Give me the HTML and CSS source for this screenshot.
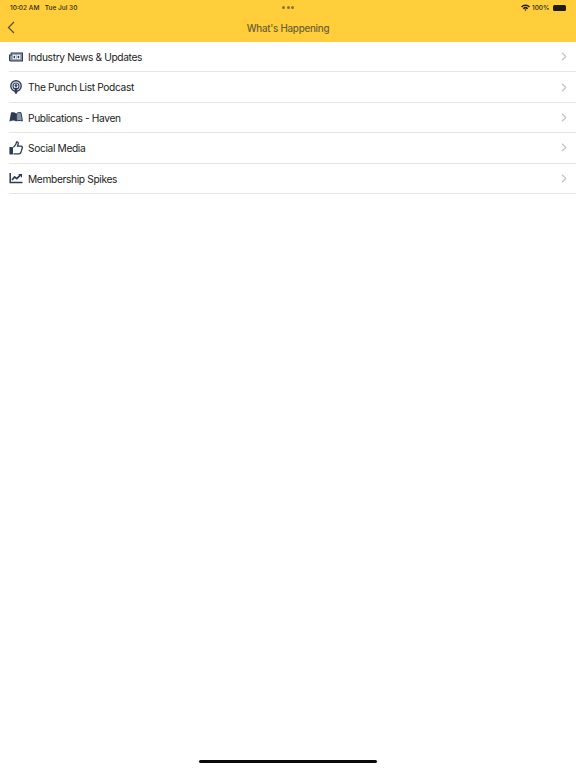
FILE: index.html
```html
<!DOCTYPE html>
<html lang="en">
<head>
    <meta charset="UTF-8">
    <meta name="viewport" content="width=device-width, initial-scale=1.0">
    <title>What's Happening</title>
    <link rel="stylesheet" href="styles.css">
</head>
<body>
    <header class="top-bar">
        <div class="status-bar">
            <div class="status-left">
                <span>10:02 AM</span>
                <span>Tue Jul 30</span>
            </div>
            <div class="status-dots"><i></i><i></i><i></i></div>
            <div class="status-right">
                <svg class="wifi" width="9" height="7" viewBox="0 0 20 15">
                    <path d="M0 5 A14 14 0 0 1 20 5 L17.6 7.6 A10.6 10.6 0 0 0 2.4 7.6 Z" />
                    <path d="M4 9 A8.6 8.6 0 0 1 16 9 L13.6 11.4 A5.2 5.2 0 0 0 6.4 11.4 Z" />
                    <path d="M7.8 12.6 A3.2 3.2 0 0 1 12.2 12.6 L10 15 Z" />
                </svg>
                <span>100%</span>
                <div class="battery"></div>
            </div>
        </div>
        <div class="nav-bar">
            <svg class="back" width="8" height="13" viewBox="0 0 8 13">
                <path d="M7 1 L1.5 6.5 L7 12" />
            </svg>
            <div class="nav-title">What's Happening</div>
        </div>
    </header>

    <ul class="menu">
        <li class="menu-item">
            <svg class="icon" width="14" height="14" viewBox="0 0 14 14">
                <path d="M2.2 3 H13.5 V11 H1.8 A1.3 1.3 0 0 1 .5 9.7 V5 H2.2 Z" fill="#8d97aa" stroke="#2b3a55" stroke-width="1.1" />
                <rect x="3.8" y="4.8" width="3" height="4.4" fill="#fff" />
                <rect x="7.6" y="4.8" width="3.6" height="4.4" fill="#fff" />
                <rect x="4.6" y="5.8" width="1.4" height="2.4" fill="#2b3a55" />
                <rect x="8.6" y="5.8" width="1.6" height="2.4" fill="#2b3a55" />
            </svg>
            <span class="label">Industry News &amp; Updates</span>
            <svg class="chevron" width="6" height="9" viewBox="0 0 6 9"><path d="M1 .8 L4.8 4.5 L1 8.2" /></svg>
        </li>
        <li class="menu-item">
            <svg class="icon" width="14" height="14" viewBox="0 0 14 14">
                <circle cx="7" cy="6" r="5.2" fill="none" stroke="#2b3a55" stroke-width="1.4" />
                <circle cx="7" cy="6" r="3" fill="none" stroke="#2b3a55" stroke-width="1.1" />
                <circle cx="7" cy="5.6" r="1.4" fill="#2b3a55" />
                <rect x="5.7" y="7.6" width="2.6" height="6.2" rx="1.1" fill="#2b3a55" />
            </svg>
            <span class="label">The Punch List Podcast</span>
            <svg class="chevron" width="6" height="9" viewBox="0 0 6 9"><path d="M1 .8 L4.8 4.5 L1 8.2" /></svg>
        </li>
        <li class="menu-item">
            <svg class="icon" width="14" height="14" viewBox="0 0 14 14">
                <path d="M2 2.5 C4 2 6 2.4 7.2 3.4 V11.4 C6 10.4 3.5 10.2 .4 11.4 Z" fill="#2b3a55" />
                <path d="M7.6 3.6 C8.5 2.6 10.4 2.2 12 2.7 L13.4 11 C10.8 10.2 8.6 10.4 7.6 11 Z" fill="#8d97aa" stroke="#2b3a55" stroke-width="1" />
            </svg>
            <span class="label">Publications - Haven</span>
            <svg class="chevron" width="6" height="9" viewBox="0 0 6 9"><path d="M1 .8 L4.8 4.5 L1 8.2" /></svg>
        </li>
        <li class="menu-item">
            <svg class="icon" width="14" height="14" viewBox="0 0 14 14">
                <rect x=".4" y="6" width="3.6" height="7.4" rx=".6" fill="#2b3a55" />
                <path d="M4.4 6.4 L6.8 3.4 C7.2 2.6 7.2 1.6 7.6 .9 C9 .7 9.6 2 9 3.6 L8.5 5.2 H12 C13.2 5.2 13.6 6.2 13.2 7.2 L11.8 11.6 C11.5 12.4 11 12.8 10.2 12.8 H4.4" fill="none" stroke="#2b3a55" stroke-width="1.3" />
            </svg>
            <span class="label">Social Media</span>
            <svg class="chevron" width="6" height="9" viewBox="0 0 6 9"><path d="M1 .8 L4.8 4.5 L1 8.2" /></svg>
        </li>
        <li class="menu-item">
            <svg class="icon" width="14" height="14" viewBox="0 0 14 14">
                <path d="M1.2 2 V11.4 H13.5" fill="none" stroke="#2b3a55" stroke-width="1.5" />
                <path d="M3 9 L5.6 6 L7.8 7.6 L11 4.4" fill="none" stroke="#2b3a55" stroke-width="1.7" />
                <path d="M9.2 3 H13 V6.8 Z" fill="#2b3a55" />
            </svg>
            <span class="label">Membership Spikes</span>
            <svg class="chevron" width="6" height="9" viewBox="0 0 6 9"><path d="M1 .8 L4.8 4.5 L1 8.2" /></svg>
        </li>
    </ul>

    <div class="home-indicator"></div>
</body>
</html>
```

FILE: styles.css
```css
* {
    box-sizing: border-box;
}
html, body {
    height: 100%;
}
body {
    margin: 0;
    display: flex;
    flex-direction: column;
    font-family: Inter, "Liberation Sans", Arial, sans-serif;
    background-color: #fff;
    color: #1f2126;
}
.top-bar {
    height: 42px;
    background-color: #ffce3a;
    flex-shrink: 0;
}
.status-bar {
    height: 14px;
    display: flex;
    align-items: center;
    justify-content: space-between;
    padding: 1px 10px 0;
    font-size: 6.5px;
    font-weight: 500;
    color: #2c2a1e;
    position: relative;
}
.status-left {
    display: flex;
    gap: 5.5px;
}
.status-dots {
    display: flex;
    gap: 1.5px;
    position: absolute;
    left: 282px;
    top: 6px;
}
.status-dots i {
    width: 3px;
    height: 3px;
    border-radius: 50%;
    background-color: #8a7430;
}
.status-right {
    display: flex;
    align-items: center;
    gap: 2.5px;
}
.wifi {
    fill: #1f1c10;
    margin-right: -0.5px;
}
.battery {
    width: 13px;
    height: 6px;
    margin-left: 1px;
    border-radius: 1.5px;
    background-color: #1f1c10;
}
.nav-bar {
    height: 28px;
    display: flex;
    align-items: center;
    justify-content: center;
    position: relative;
}
.back {
    position: absolute;
    left: 7px;
    top: 7px;
    fill: none;
    stroke: #5a5230;
    stroke-width: 1.3;
}
.nav-title {
    font-size: 9.8px;
    font-weight: 500;
    letter-spacing: -0.25px;
    color: #6b6136;
}
.menu {
    list-style: none;
    margin: 0;
    padding: 0 0 0 9px;
}
.menu-item {
    height: 30.4px;
    display: flex;
    align-items: center;
    padding-right: 9px;
    border-bottom: 1px solid #e6e6e6;
}
.icon {
    flex-shrink: 0;
    margin-right: 5px;
}
.label {
    flex: 1;
    font-size: 10.2px;
    letter-spacing: -0.35px;
    padding-top: 0.5px;
    color: #1a1c20;
}
.chevron {
    fill: none;
    stroke: #c4c4c8;
    stroke-width: 1.2;
}
.home-indicator {
    width: 178px;
    height: 3px;
    margin: auto auto 5px;
    border-radius: 2px;
    background-color: #0a0a0a;
}
```
